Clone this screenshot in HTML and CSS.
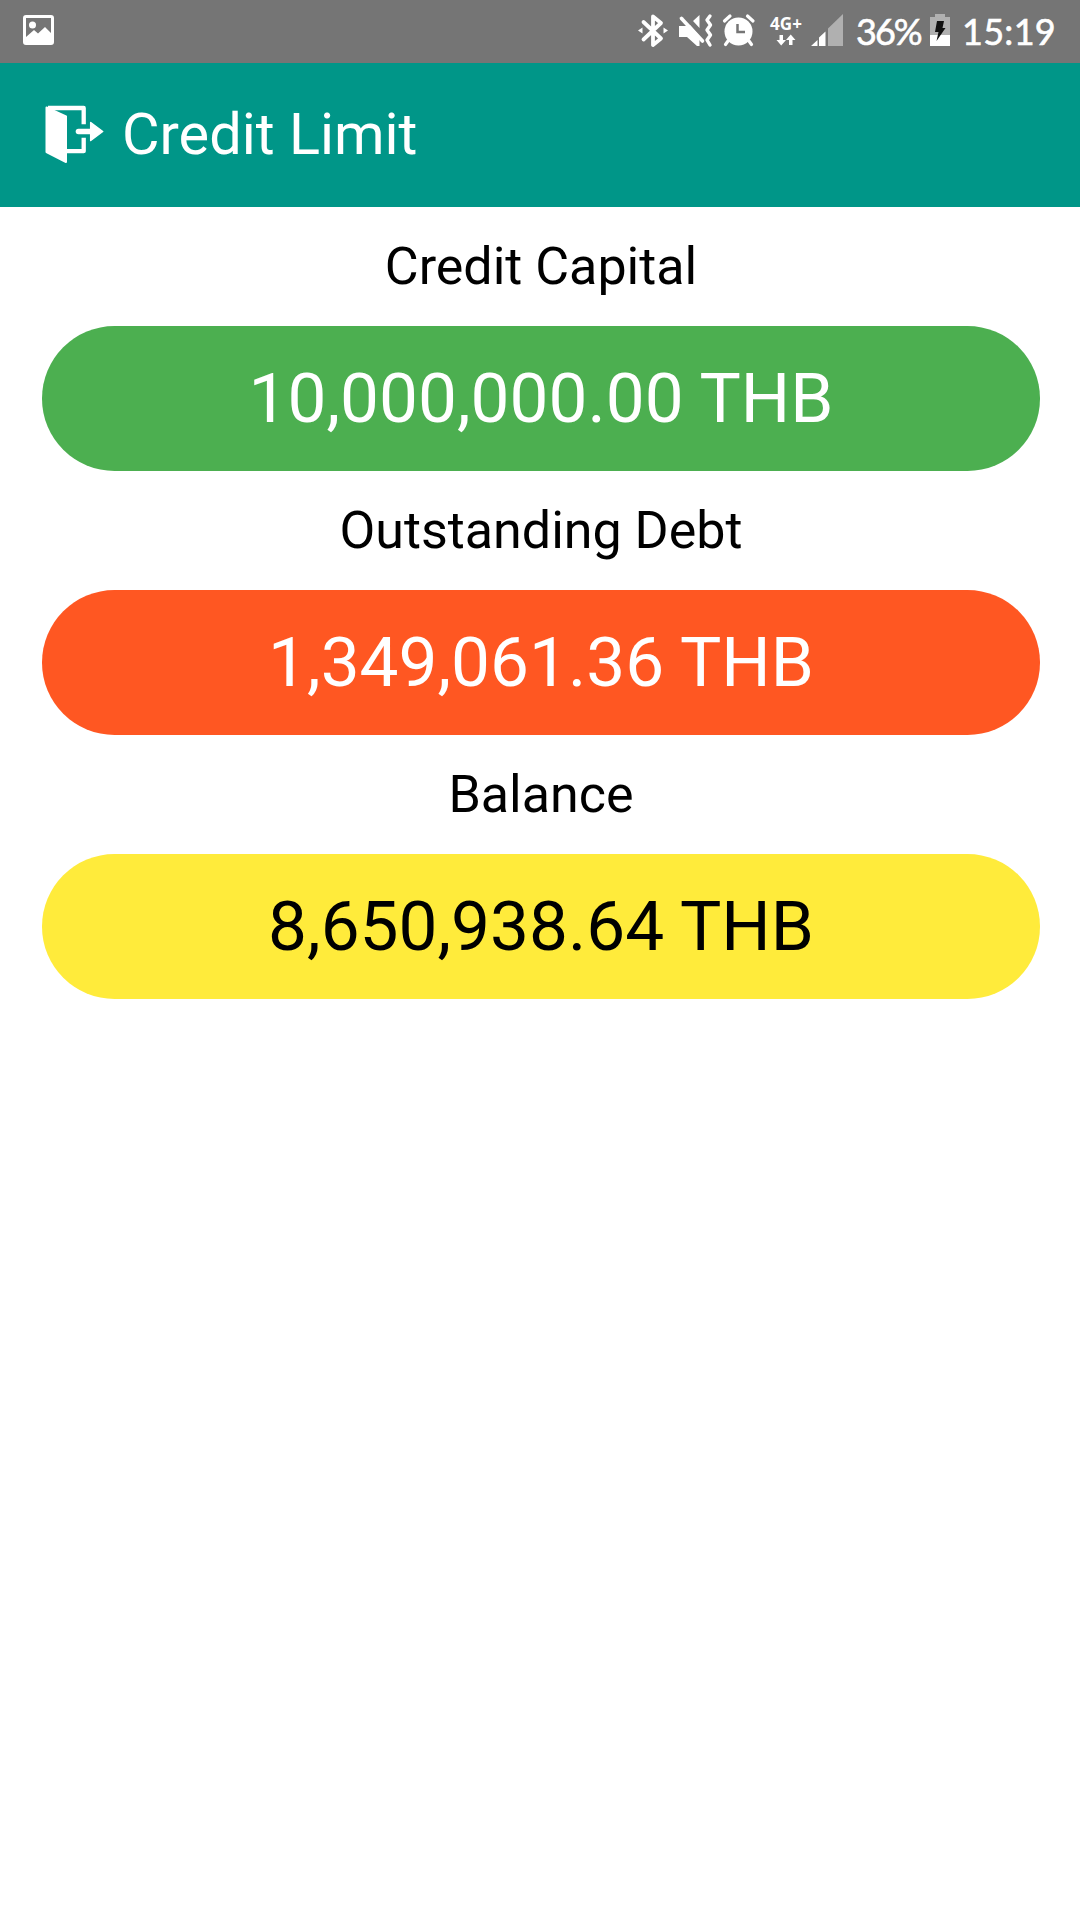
FILE: index.html
```html
<!DOCTYPE html>
<html lang="en">

<head>
  <meta charset="utf-8">
  <title>Credit Limit</title>
  <link rel="stylesheet" href="styles.css">
</head>

<body>
  <div class="status-bar">
    <svg class="icon-picture" width="31" height="31" viewBox="0 0 31 31">
      <path fill="#fff" fill-rule="evenodd" d="M3 0H28Q31 0 31 3V27Q31 30 28 30H3Q0 30 0 27V3Q0 0 3 0ZM3 3V22L11 15L15 18.500L22 12L28 18V3Z"/>
      <circle cx="9.500" cy="10" r="3.500" fill="#fff"/>
    </svg>
    <div class="status-right">
      <!-- bluetooth -->
      <svg class="icon-bt" width="30" height="34" viewBox="0 0 30 34">
        <path fill="none" stroke="#fff" stroke-width="3.800" stroke-linejoin="round" stroke-linecap="round" d="M5.500 8L23 24.500L15 31V2.500L23 9L5.500 25.500"/>
        <path fill="#fff" d="M0 16.500L4.500 13.500V19.500ZM30 16.500L25.500 13.500V19.500Z"/>
      </svg>
      <!-- muted, vibrate -->
      <svg class="icon-mute" width="34" height="34" viewBox="0 0 34 34">
        <path fill="#fff" d="M0 12H6L11 11L20.500 22V32H18L8 23H0ZM14 7L20.500 1V14Z"/>
        <path fill="none" stroke="#fff" stroke-width="3.600" stroke-linecap="round" d="M2.500 4.500L23.500 27"/>
        <path fill="none" stroke="#fff" stroke-width="3.400" stroke-linejoin="round" stroke-linecap="round" d="M31 2L28 6L31.500 11L28 16L31.500 21L28 26L31 31"/>
      </svg>
      <!-- alarm -->
      <svg class="icon-alarm" width="32" height="34" viewBox="0 0 32 34">
        <circle cx="15.500" cy="17.500" r="14" fill="#fff"/>
        <path fill="none" stroke="#fff" stroke-width="3.200" stroke-linecap="round" d="M1.500 7L7 2M24.500 2L30 7M5 27L2.500 30.500M26 27L28.500 30.500"/>
        <path fill="none" stroke="#757575" stroke-width="2.500" d="M14.500 10V18H22"/>
      </svg>
      <div class="network">
        <span>4G+</span>
        <svg width="20" height="12" viewBox="0 0 20 12">
          <path fill="#fff" d="M3.500 1H7V6H10L5.200 11.500L.500 6H3.500ZM13 11V6H10L14.700 .500L19.500 6H16.500V11Z"/>
        </svg>
      </div>
      <!-- signal -->
      <svg class="icon-signal" width="33" height="33" viewBox="0 0 33 33">
        <path fill="#fff" d="M0 32L6.500 26V32ZM8 32V23.500L14.500 17.500V32Z"/>
        <path fill="#b0b0b0" d="M17 32V14.500L32 0V32Z"/>
      </svg>
      <span class="percent">36%</span>
      <!-- battery, charging -->
      <svg class="icon-battery" width="20" height="32" viewBox="0 0 20 32">
        <path fill="#b0b0b0" d="M5 0H15V3H20V22H0V3H5Z"/>
        <path fill="#fff" d="M0 21H20V32H0Z"/>
        <path fill="#111" d="M7 7H14L12.500 14H15.500L6.500 27L8.500 18H5Z"/>
      </svg>
      <span class="clock">15:19</span>
    </div>
  </div>

  <header class="app-bar">
    <svg class="icon-exit" width="60" height="60" viewBox="0 0 60 60">
      <path fill="none" stroke="#fff" stroke-width="4.300" stroke-linejoin="round" d="M4 4H39.700V20.300M39.700 33.700V47.200H20"/>
      <path fill="#fff" stroke="#fff" stroke-width="2" stroke-linejoin="round" d="M2.500 3.500L22 12.500V58L2.500 48Z"/>
      <path fill="none" stroke="#fff" stroke-width="5.600" stroke-linecap="round" d="M34.500 27.500H47"/>
      <path fill="#fff" stroke="#fff" stroke-width="1.500" stroke-linejoin="round" d="M46.700 18.500L58.700 27.500L46.700 36.500Z"/>
    </svg>
    <h1>Credit Limit</h1>
  </header>

  <main>
    <h2>Credit Capital</h2>
    <div class="amount capital">10,000,000.00 THB</div>
    <h2>Outstanding Debt</h2>
    <div class="amount debt">1,349,061.36 THB</div>
    <h2>Balance</h2>
    <div class="amount balance">8,650,938.64 THB</div>
  </main>
</body>

</html>
```
FILE: styles.css
```css
* {
  box-sizing: border-box;
}

body {
  font-family: Roboto, sans-serif;
  margin: 0;
  background-color: #fff;
  color: #000;
}

h1, h2 {
  margin: 0;
  font-weight: 400;
}

svg {
  display: block;
  flex: none;
  overflow: visible;
}

.status-bar {
  display: flex;
  justify-content: space-between;
  height: 63px;
  padding: 0 23px;
  background-color: #757575;
  color: #fff;
}

.icon-picture {
  margin-top: 15px;
}

.status-right {
  display: flex;
  padding-top: 14px;
}

.icon-mute {
  margin-left: 11px;
}

.icon-alarm {
  margin-left: 10px;
}

.network {
  display: flex;
  flex-direction: column;
  align-items: center;
  width: 34px;
  margin-left: 14px;
  font: 700 17px/20px "Open Sans", sans-serif;
}

.icon-signal {
  margin-left: 8px;
}

.percent, .clock {
  font-family: Lato, sans-serif;
  font-size: 36px;
  line-height: 35px;
  white-space: nowrap;
  -webkit-text-stroke: 0.6px #fff;
}

.percent {
  width: 68px;
  margin-left: 12px;
  letter-spacing: -2px;
}

.icon-battery {
  margin-left: 6px;
}

.clock {
  width: 95px;
  margin-left: 12px;
  letter-spacing: 0.3px;
}

.app-bar {
  display: flex;
  height: 144px;
  padding: 41px 44px 0;
  background-color: #009688;
  color: #fff;
}

.app-bar h1 {
  margin-left: 18px;
  font-size: 57.7px;
  line-height: 60px;
}

main {
  padding: 0 40px 0 42px;
  text-align: center;
}

h2 {
  height: 119px;
  font-size: 52px;
  line-height: 119px;
}

.amount {
  height: 145px;
  border-radius: 73px;
  font-size: 69.3px;
  line-height: 145px;
  color: #fff;
}

.capital {
  background-color: #4caf50;
}

.debt {
  background-color: #ff5722;
}

.balance {
  background-color: #ffeb3b;
  color: #000;
}
```
